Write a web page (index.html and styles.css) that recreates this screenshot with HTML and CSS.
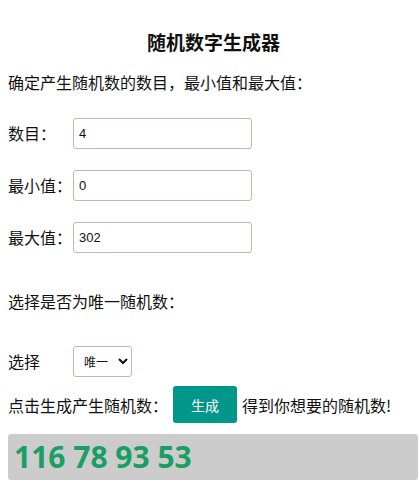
FILE: index.html
```html
<!DOCTYPE html>
<html lang="zh">
<head>
<meta charset="utf-8">
<link rel="stylesheet" href="styles.css">
</head>
<body>
<div class="page">
  <h3 class="title">随机数字生成器</h3>
  <p class="intro">确定产生随机数的数目，最小值和最大值：</p>
  <div class="fields">
    <div class="row"><label class="lbl">数目：</label><input class="inp" type="text" value="4"></div>
    <div class="row"><label class="lbl">最小值：</label><input class="inp" type="text" value="0"></div>
    <div class="row"><label class="lbl">最大值：</label><input class="inp" type="text" value="302"></div>
  </div>
  <p class="unique">选择是否为唯一随机数：</p>
  <div class="row sel-row"><label class="lbl">选择</label><select class="sel"><option>唯一</option></select></div>
  <div class="gen-row"><span>点击生成产生随机数：</span><button class="btn">生成</button><span>得到你想要的随机数!</span></div>
  <div class="result">116 78 93 53</div>
</div>
</body>
</html>
```
FILE: styles.css
```css
html, body { margin: 0; padding: 0; background: #fff; }
body { font-family: "Noto Sans CJK SC", "Noto Sans", sans-serif; color: #111; font-size: 16px; }
.page { padding: 28px 0 0 8px; display: flow-root; }
.title { margin: 0; font-size: 19px; line-height: 28px; text-align: center; font-weight: 700; }
.intro { margin: 14px 0 0; line-height: 24px; }
.fields { margin-top: 24px; display: flex; flex-direction: column; gap: 22px; }
.row { display: flex; align-items: center; height: 30px; }
.lbl { width: 65px; flex: none; line-height: 24px; }
.inp { box-sizing: border-box; width: 179px; height: 31px; margin: 0; border: 1px solid #c9b5ad; border-radius: 3px; padding: 0 5px; font-family: "Liberation Sans", Arial, sans-serif; font-size: 13px; color: #111; }
.unique { margin: 37px 0 0; line-height: 24px; }
.sel-row { margin-top: 33px; }
.sel { box-sizing: border-box; width: 59px; height: 31px; border: 1px solid #c9b5ad; border-radius: 3px; background: #fff; font-family: "Noto Sans CJK SC", sans-serif; font-size: 12px; color: #111; padding: 0 0 0 6px; }
.gen-row { margin-top: 10px; display: flex; align-items: center; height: 37px; }
.btn { box-sizing: border-box; width: 64px; height: 37px; margin: 0 5px 0 5px; border: none; border-radius: 3px; background: #00968a; color: #fff; font-family: "Noto Sans CJK SC", sans-serif; font-size: 14px; }
.result { box-sizing: border-box; margin-top: 11px; width: 410px; height: 46px; background: #cccccc; border-radius: 3px; padding: 0 6px; font-family: "Open Sans", sans-serif; font-weight: 700; font-size: 30px; line-height: 46px; color: #1a9e64; }
```
